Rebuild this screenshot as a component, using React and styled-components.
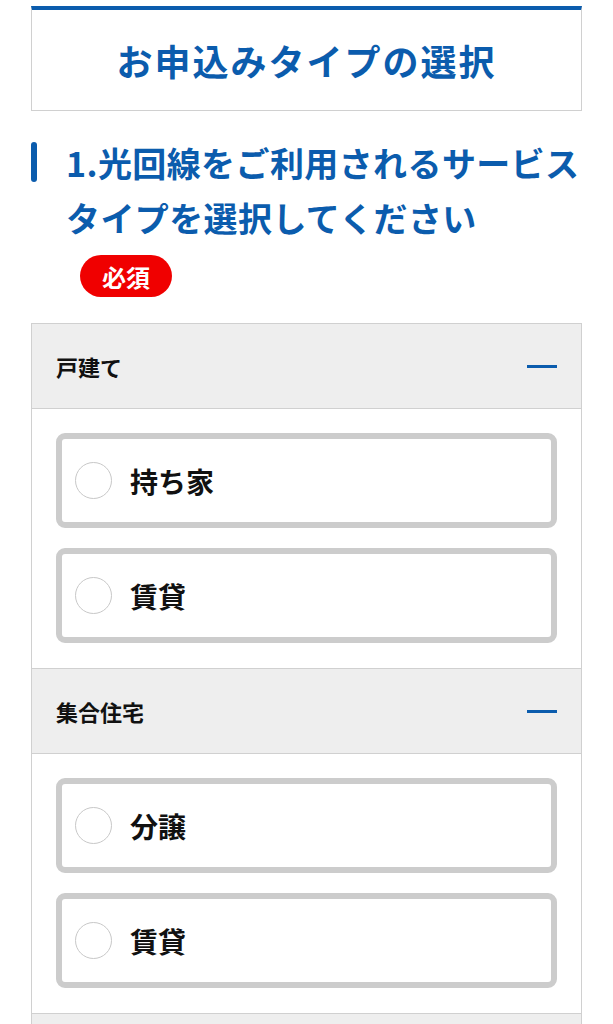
import styled, { createGlobalStyle } from "styled-components";

const GlobalStyle = createGlobalStyle`
  body {
    margin: 0;
    background: #fff;
    font-family: "Noto Sans CJK JP", "Noto Sans", sans-serif;
  }
`;

const Page = styled.div`
  padding: 6px 31px 0 31px;
`;

const TitleBox = styled.div`
  border: 1px solid #d0d0d0;
  border-top: 4px solid #0b5cad;
  height: 100px;
  display: flex;
  align-items: center;
  justify-content: center;
`;

const Title = styled.h1`
  margin: 0;
  color: #0b5cad;
  font-size: 36px;
  font-weight: 700;
  letter-spacing: 2px;
`;

const Heading = styled.div`
  position: relative;
  margin-top: 24px;
  padding-left: 35px;
`;

const HeadingBar = styled.span`
  position: absolute;
  left: 0;
  top: 7px;
  width: 6px;
  height: 40px;
  border-radius: 3px;
  background: #0b5cad;
`;

const HeadingText = styled.h2`
  margin: 0;
  color: #0b5cad;
  font-size: 34px;
  font-weight: 700;
  line-height: 55px;
  letter-spacing: 0.4px;
`;

const Badge = styled.span`
  display: flex;
  align-items: center;
  justify-content: center;
  margin: 10px 0 0 14px;
  width: 92px;
  height: 42px;
  border-radius: 21px;
  background: #f00000;
  color: #fff;
  font-size: 24px;
  font-weight: 700;
`;

const Accordion = styled.div`
  margin-top: 26px;
  border: 1px solid #d0d0d0;
  border-bottom: none;
`;

const Header = styled.div`
  height: 84px;
  background: #eeeeee;
  border-bottom: 1px solid #d0d0d0;
  display: flex;
  align-items: center;
  justify-content: space-between;
  padding: 0 24px;
  font-size: 22px;
  font-weight: 700;
  color: #111;
`;

const Minus = styled.span`
  width: 30px;
  height: 3px;
  background: #0b5cad;
`;

const Body = styled.div`
  padding: 24px 24px 25px;
  border-bottom: 1px solid #d0d0d0;
  display: flex;
  flex-direction: column;
  gap: 20px;
`;

const Option = styled.label`
  box-sizing: border-box;
  height: 95px;
  border: 6px solid #cccccc;
  border-radius: 9px;
  display: flex;
  align-items: center;
  gap: 18px;
  padding-left: 13px;
  font-size: 28px;
  font-weight: 700;
  color: #111;
`;

const Radio = styled.span`
  width: 37px;
  height: 37px;
  box-sizing: border-box;
  border-radius: 50%;
  border: 1px solid #c8c8c8;
  background: #fff;
`;

const groups = [
  { name: "戸建て", options: ["持ち家", "賃貸"] },
  { name: "集合住宅", options: ["分譲", "賃貸"] },
  { name: "その他", options: [] },
];

function App() {
  return (
    <>
      <GlobalStyle />
      <Page>
        <TitleBox>
          <Title>お申込みタイプの選択</Title>
        </TitleBox>
        <Heading>
          <HeadingBar />
          <HeadingText>1.光回線をご利用されるサービスタイプを選択してください</HeadingText>
          <Badge>必須</Badge>
        </Heading>
        <Accordion>
          {groups.map((g) => (
            <div key={g.name}>
              <Header>
                <span>{g.name}</span>
                <Minus />
              </Header>
              {g.options.length > 0 && (
                <Body>
                  {g.options.map((o) => (
                    <Option key={o}>
                      <Radio />
                      {o}
                    </Option>
                  ))}
                </Body>
              )}
            </div>
          ))}
        </Accordion>
      </Page>
    </>
  );
}

export default App;
